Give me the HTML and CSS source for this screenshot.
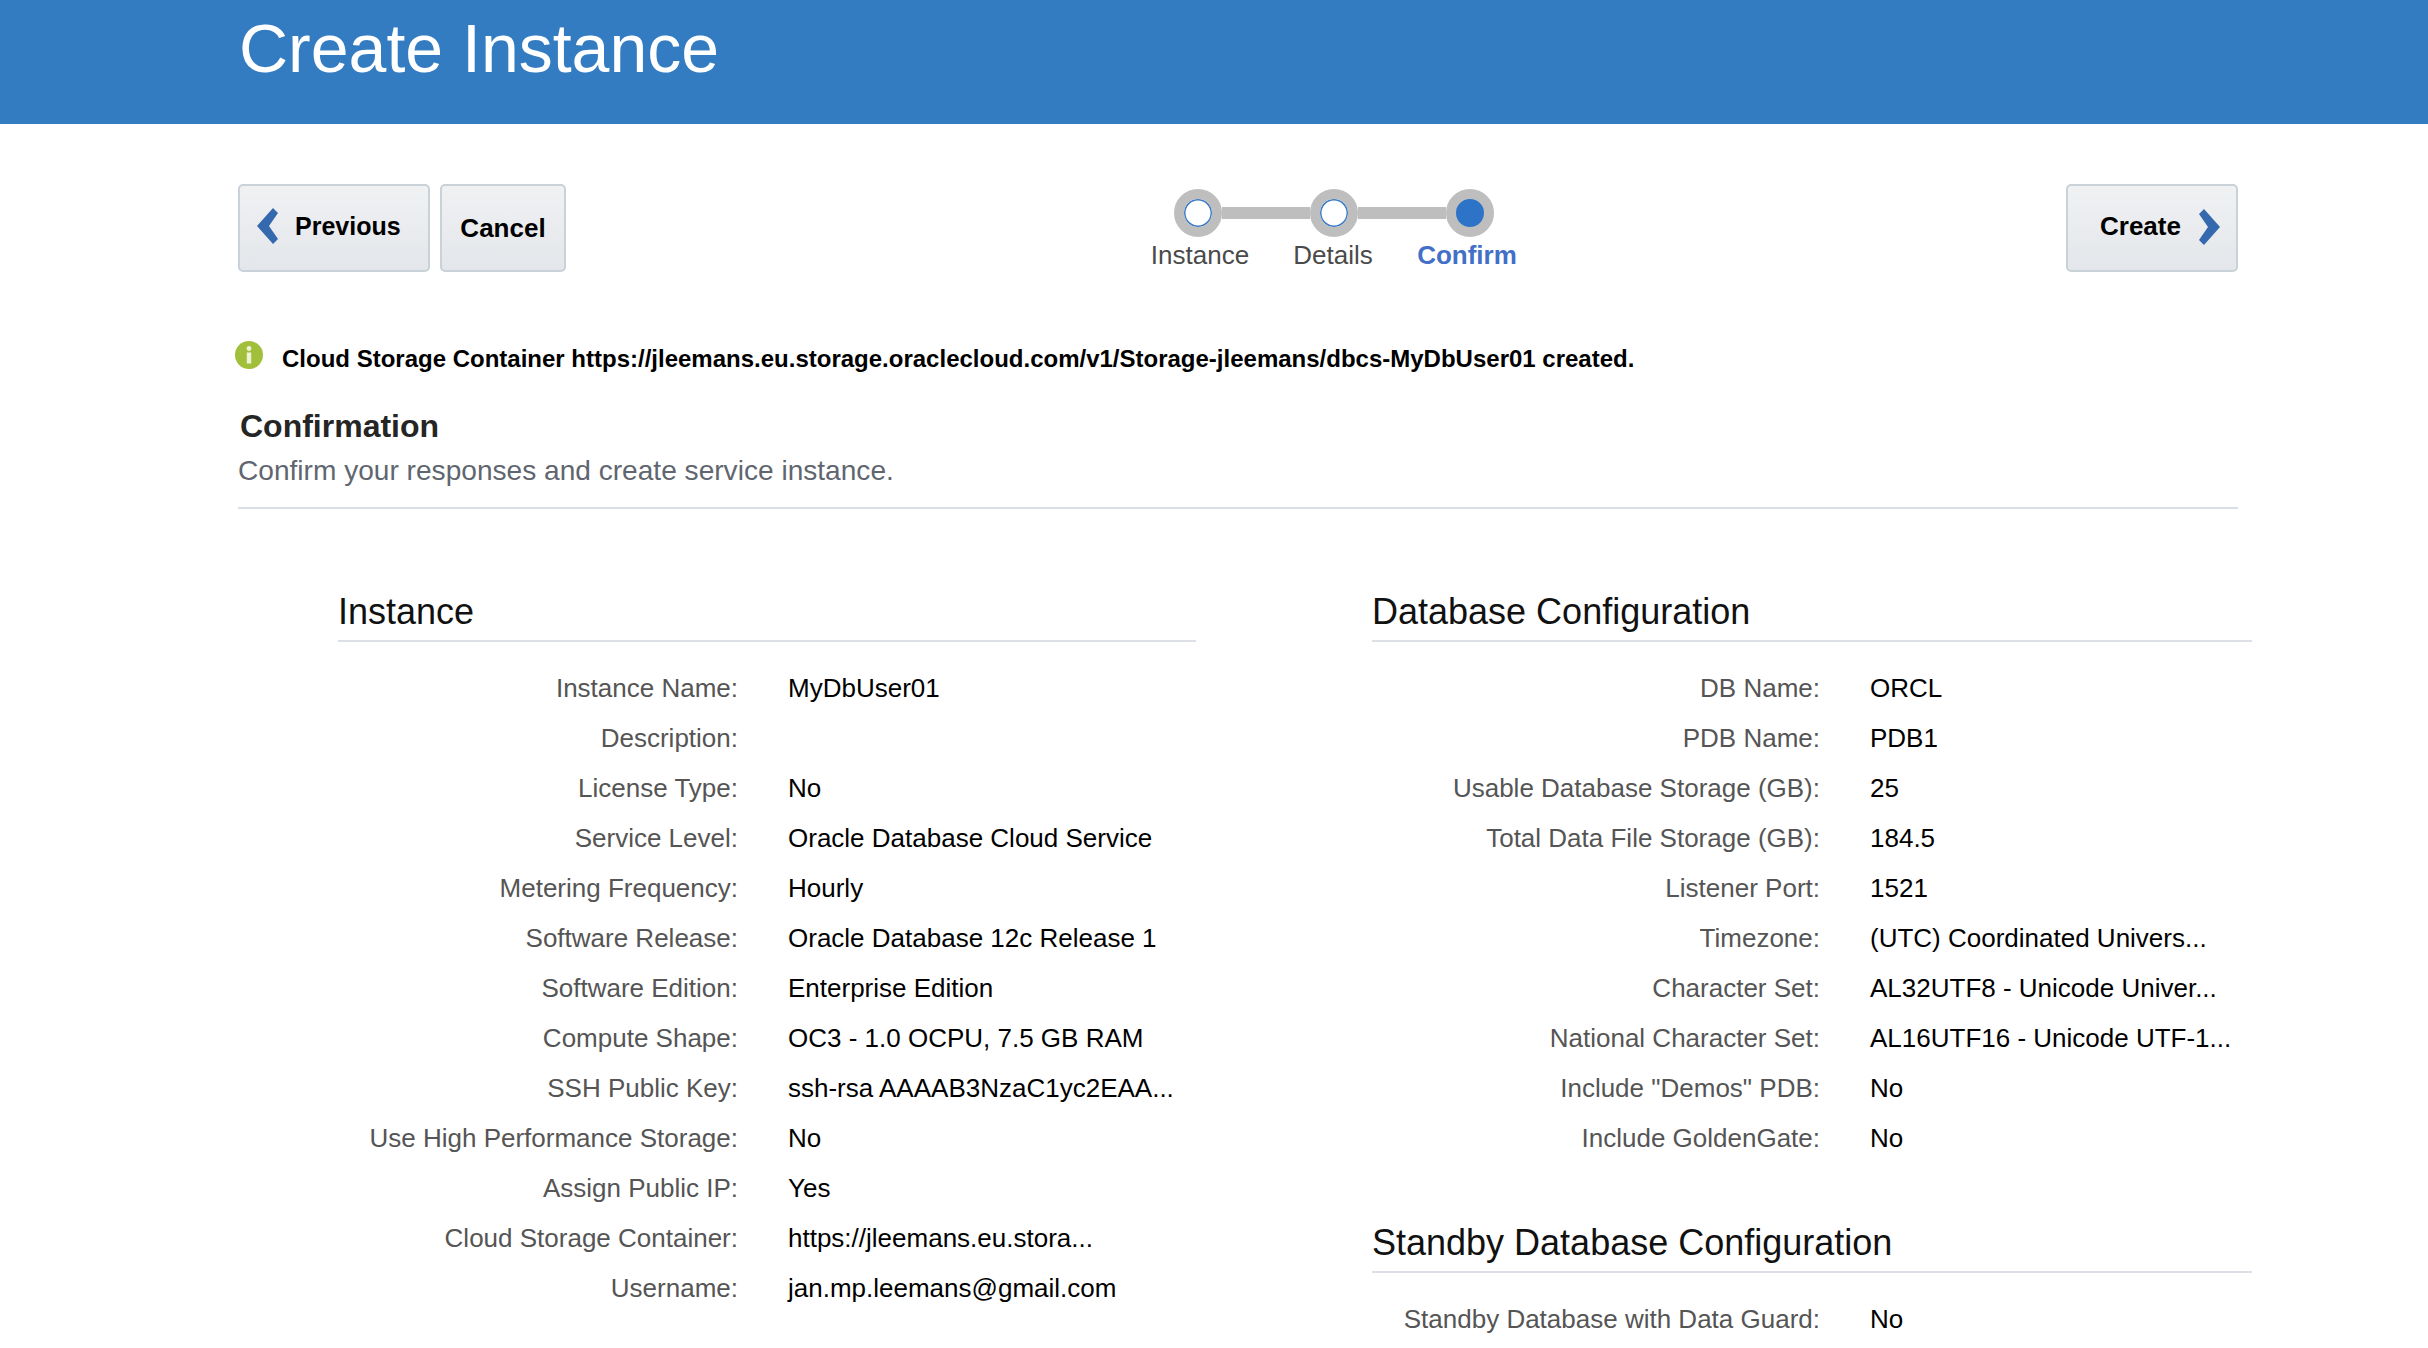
FILE: index.html
```html
<!DOCTYPE html>
<html lang="en">
<head>
<meta charset="UTF-8">
<meta name="viewport" content="width=device-width, initial-scale=1.0">
<title>Create Instance</title>
<link rel="stylesheet" href="styles.css">
</head>
<body>

<header class="banner">
    <h1>Create Instance</h1>
</header>

<main class="page">
    <div class="toolbar">
        <div class="btn-group">
            <button class="btn btn-prev" type="button">
                <svg class="chevron" width="21" height="36" viewBox="0 0 21 36"><polygon points="16,0 21,5 12,18 21,31 16,36 0,18" fill="#3569ae"/></svg>
                Previous
            </button>
            <button class="btn btn-cancel" type="button">Cancel</button>
        </div>

        <div class="stepper">
            <div class="track">
                <span class="dot"></span>
                <span class="bar"></span>
                <span class="dot"></span>
                <span class="bar"></span>
                <span class="dot dot-active"></span>
            </div>
            <div class="step-labels">
                <span>Instance</span>
                <span>Details</span>
                <span class="step-current">Confirm</span>
            </div>
        </div>

        <button class="btn btn-next" type="button">
            Create
            <svg class="chevron" width="21" height="36" viewBox="0 0 21 36"><polygon points="5,0 0,5 9,18 0,31 5,36 21,18" fill="#3569ae"/></svg>
        </button>
    </div>

    <div class="message">
        <svg class="info-icon" width="30" height="30" viewBox="0 0 30 30">
            <circle cx="15" cy="15" r="14" fill="#a2bf3c"/>
            <circle cx="15" cy="8.500" r="2.400" fill="#eef3d8"/>
            <rect x="12.800" y="12.500" width="4.400" height="11" fill="#eef3d8"/>
        </svg>
        <span>Cloud Storage Container https://jleemans.eu.storage.oraclecloud.com/v1/Storage-jleemans/dbcs-MyDbUser01 created.</span>
    </div>

    <section class="intro">
        <h2>Confirmation</h2>
        <p>Confirm your responses and create service instance.</p>
    </section>

    <div class="columns">
        <section class="col-left">
            <h3>Instance</h3>
            <dl class="rows">
                <dt>Instance Name:</dt><dd>MyDbUser01</dd>
                <dt>Description:</dt><dd></dd>
                <dt>License Type:</dt><dd>No</dd>
                <dt>Service Level:</dt><dd>Oracle Database Cloud Service</dd>
                <dt>Metering Frequency:</dt><dd>Hourly</dd>
                <dt>Software Release:</dt><dd>Oracle Database 12c Release 1</dd>
                <dt>Software Edition:</dt><dd>Enterprise Edition</dd>
                <dt>Compute Shape:</dt><dd>OC3 - 1.0 OCPU, 7.5 GB RAM</dd>
                <dt>SSH Public Key:</dt><dd>ssh-rsa AAAAB3NzaC1yc2EAA...</dd>
                <dt>Use High Performance Storage:</dt><dd>No</dd>
                <dt>Assign Public IP:</dt><dd>Yes</dd>
                <dt>Cloud Storage Container:</dt><dd>https://jleemans.eu.stora...</dd>
                <dt>Username:</dt><dd>jan.mp.leemans@gmail.com</dd>
            </dl>
        </section>

        <section class="col-right">
            <h3>Database Configuration</h3>
            <dl class="rows">
                <dt>DB Name:</dt><dd>ORCL</dd>
                <dt>PDB Name:</dt><dd>PDB1</dd>
                <dt>Usable Database Storage (GB):</dt><dd>25</dd>
                <dt>Total Data File Storage (GB):</dt><dd>184.5</dd>
                <dt>Listener Port:</dt><dd>1521</dd>
                <dt>Timezone:</dt><dd>(UTC) Coordinated Univers...</dd>
                <dt>Character Set:</dt><dd>AL32UTF8 - Unicode Univer...</dd>
                <dt>National Character Set:</dt><dd>AL16UTF16 - Unicode UTF-1...</dd>
                <dt>Include "Demos" PDB:</dt><dd>No</dd>
                <dt>Include GoldenGate:</dt><dd>No</dd>
            </dl>

            <h3 class="standby">Standby Database Configuration</h3>
            <dl class="rows">
                <dt>Standby Database with Data Guard:</dt><dd>No</dd>
            </dl>
        </section>
    </div>
</main>

</body>
</html>
```

FILE: styles.css
```css
html, body {
    margin: 0;
    padding: 0;
    height: 1348px;
    overflow: hidden;
    background-color: #fff;
}
body {
    font-family: "Liberation Sans", Arial, sans-serif;
    color: #1c1c1c;
}
.banner {
    height: 124px;
    background-color: #337cc1;
    padding-left: 239px;
}
.banner h1 {
    margin: 0;
    font-size: 68px;
    font-weight: normal;
    line-height: 96px;
    color: #fff;
}
.page {
    padding: 60px 190px 0 238px;
}
.toolbar {
    display: flex;
    align-items: flex-start;
}
.btn-group {
    display: flex;
    gap: 10px;
}
.btn {
    display: flex;
    align-items: center;
    box-sizing: border-box;
    height: 88px;
    padding: 0;
    font-family: inherit;
    font-size: 26px;
    font-weight: bold;
    color: #000;
    background: linear-gradient(#f0f1f3, #e3e6ea);
    border: 2px solid #c9d1d9;
    border-radius: 5px;
}
.btn-prev {
    width: 192px;
    padding: 0 0 4px 17px;
    gap: 17px;
    font-size: 25px;
}
.btn-cancel {
    width: 126px;
    justify-content: center;
}
.btn-next {
    width: 172px;
    margin-left: auto;
    padding: 0 0 3px 32px;
    gap: 18px;
}
.chevron {
    flex: none;
}
.stepper {
    margin: 5px 0 0 563px;
    width: 408px;
}
.track {
    display: flex;
    align-items: center;
    padding-left: 45px;
}
.dot {
    width: 48px;
    height: 48px;
    box-sizing: border-box;
    border-radius: 50%;
    background-color: #fff;
    border: 10px solid #bebebe;
    box-shadow: inset 0 0 0 1.500px #3a7ac6;
}
.dot-active {
    background-color: #2d74c9;
    box-shadow: none;
}
.bar {
    width: 88px;
    height: 12px;
    background-color: #bebebe;
}
.step-labels {
    display: grid;
    grid-template-columns: 130px 136px 132px;
    padding-left: 6px;
    font-size: 26px;
    color: #4a4a4a;
    text-align: center;
    margin-top: 3px;
}
.step-current {
    font-weight: bold;
    color: #436fc8;
}
.message {
    display: flex;
    align-items: center;
    gap: 18px;
    margin: 69px 0 0 -4px;
    height: 36px;
    font-size: 24px;
    font-weight: bold;
    color: #000;
}
.info-icon {
    margin-top: -8px;
}
.intro {
    border-bottom: 2px solid #d9dfe4;
    height: 103px;
    margin-top: 27px;
}
.intro h2 {
    margin: 0 0 0 2px;
    font-size: 32px;
    line-height: 44px;
    color: #252525;
}
.intro p {
    margin: 0;
    font-size: 28.100px;
    line-height: 46px;
    color: #5f6670;
}
.columns {
    display: flex;
    margin-top: 77px;
}
.col-left {
    width: 858px;
    margin-left: 100px;
}
.col-right {
    width: 880px;
    margin-left: 176px;
    margin-right: -14px;
    flex: none;
}
h3 {
    margin: 0;
    font-size: 36px;
    font-weight: normal;
    line-height: 52px;
    height: 54px;
    color: #111;
    border-bottom: 2px solid #dcdfe6;
}
.standby {
    margin-top: 54px;
}
.rows {
    display: grid;
    margin: 0;
    padding-top: 21px;
    font-size: 26px;
    line-height: 50px;
}
.col-left .rows {
    grid-template-columns: 400px 1fr;
}
.col-right .rows {
    grid-template-columns: 448px 1fr;
}
dt {
    text-align: right;
    color: #555;
}
dd {
    margin: 0 0 0 50px;
    min-height: 50px;
    white-space: nowrap;
    color: #000;
}
```
